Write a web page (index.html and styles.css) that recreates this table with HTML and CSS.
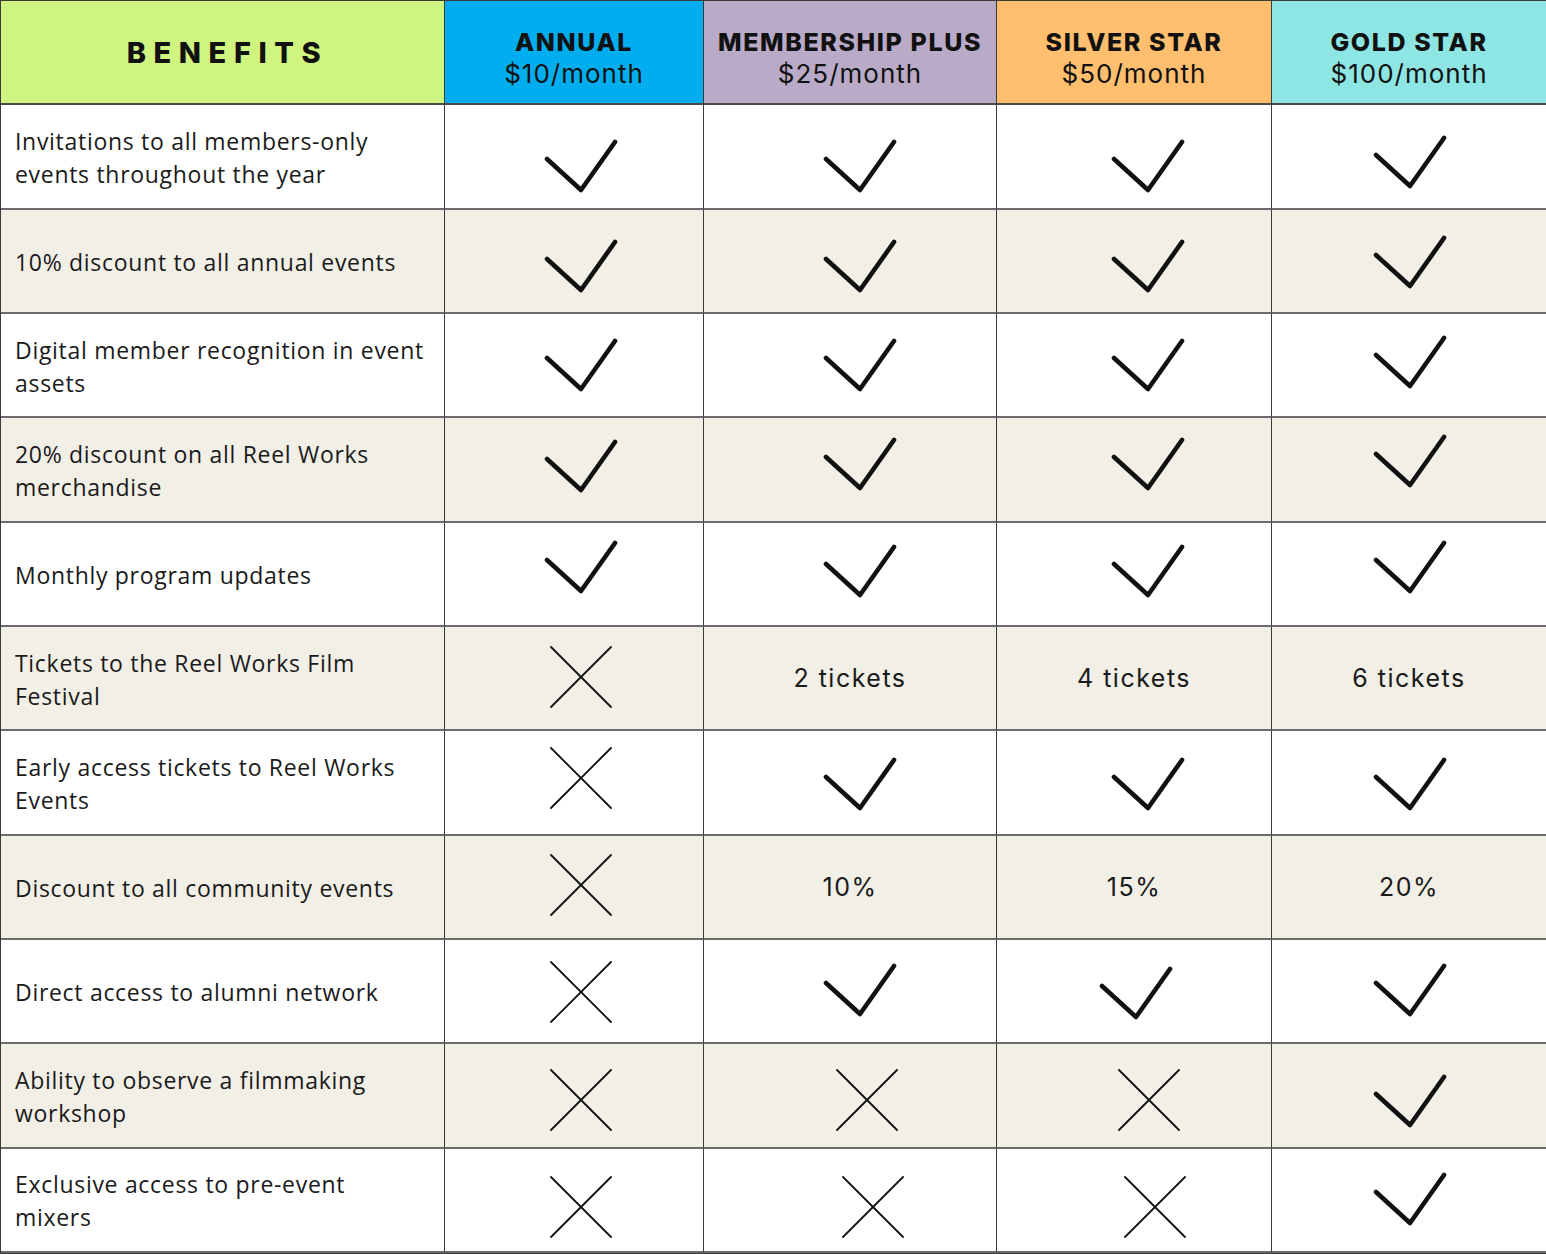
FILE: index.html
```html
<!DOCTYPE html>
<html lang="en">
<head>
<meta charset="utf-8">
<title>Membership Benefits</title>
<link rel="stylesheet" href="styles.css">
</head>
<body>
<svg width="0" height="0" class="defs" aria-hidden="true">
  <defs>
    <symbol id="chk" viewBox="0 0 74 54">
      <polyline points="3,20 37,51 71,3" fill="none" stroke="#111" stroke-width="4.6" stroke-linecap="round" stroke-linejoin="round"/>
    </symbol>
    <symbol id="crs" viewBox="0 0 62 62">
      <line x1="1" y1="1" x2="61" y2="61" stroke="#111" stroke-width="1.8" stroke-linecap="round"/>
      <line x1="61" y1="1" x2="1" y2="61" stroke="#111" stroke-width="1.8" stroke-linecap="round"/>
    </symbol>
  </defs>
</svg>
<div class="table">
  <div class="row">
    <div class="cell head benefits">BENEFITS</div>
    <div class="cell head annual"><span class="tier">ANNUAL</span><span class="price">$10/month</span></div>
    <div class="cell head plus"><span class="tier">MEMBERSHIP PLUS</span><span class="price">$25/month</span></div>
    <div class="cell head silver"><span class="tier">SILVER STAR</span><span class="price">$50/month</span></div>
    <div class="cell head gold"><span class="tier">GOLD STAR</span><span class="price">$100/month</span></div>
  </div>

  <div class="row r1">
    <div class="cell label">Invitations to all members-only events throughout the year</div>
    <div class="cell mark c1"><svg class="check"><use href="#chk"/></svg></div>
    <div class="cell mark c2"><svg class="check"><use href="#chk"/></svg></div>
    <div class="cell mark c3"><svg class="check"><use href="#chk"/></svg></div>
    <div class="cell mark c4"><svg class="check"><use href="#chk"/></svg></div>
  </div>

  <div class="row r2 alt">
    <div class="cell label">10% discount to all annual events</div>
    <div class="cell mark c1"><svg class="check"><use href="#chk"/></svg></div>
    <div class="cell mark c2"><svg class="check"><use href="#chk"/></svg></div>
    <div class="cell mark c3"><svg class="check"><use href="#chk"/></svg></div>
    <div class="cell mark c4"><svg class="check"><use href="#chk"/></svg></div>
  </div>

  <div class="row r3">
    <div class="cell label">Digital member recognition in event assets</div>
    <div class="cell mark c1"><svg class="check"><use href="#chk"/></svg></div>
    <div class="cell mark c2"><svg class="check"><use href="#chk"/></svg></div>
    <div class="cell mark c3"><svg class="check"><use href="#chk"/></svg></div>
    <div class="cell mark c4"><svg class="check"><use href="#chk"/></svg></div>
  </div>

  <div class="row r4 alt">
    <div class="cell label">20% discount on all Reel Works merchandise</div>
    <div class="cell mark c1"><svg class="check"><use href="#chk"/></svg></div>
    <div class="cell mark c2"><svg class="check"><use href="#chk"/></svg></div>
    <div class="cell mark c3"><svg class="check"><use href="#chk"/></svg></div>
    <div class="cell mark c4"><svg class="check"><use href="#chk"/></svg></div>
  </div>

  <div class="row r5">
    <div class="cell label">Monthly program updates</div>
    <div class="cell mark c1"><svg class="check"><use href="#chk"/></svg></div>
    <div class="cell mark c2"><svg class="check"><use href="#chk"/></svg></div>
    <div class="cell mark c3"><svg class="check"><use href="#chk"/></svg></div>
    <div class="cell mark c4"><svg class="check"><use href="#chk"/></svg></div>
  </div>

  <div class="row r6 alt">
    <div class="cell label">Tickets to the Reel Works Film Festival</div>
    <div class="cell mark c1"><svg class="cross"><use href="#crs"/></svg></div>
    <div class="cell value">2 tickets</div>
    <div class="cell value">4 tickets</div>
    <div class="cell value">6 tickets</div>
  </div>

  <div class="row r7">
    <div class="cell label">Early access tickets to Reel Works Events</div>
    <div class="cell mark c1"><svg class="cross"><use href="#crs"/></svg></div>
    <div class="cell mark c2"><svg class="check"><use href="#chk"/></svg></div>
    <div class="cell mark c3"><svg class="check"><use href="#chk"/></svg></div>
    <div class="cell mark c4"><svg class="check"><use href="#chk"/></svg></div>
  </div>

  <div class="row r8 alt">
    <div class="cell label">Discount to all community events</div>
    <div class="cell mark c1"><svg class="cross"><use href="#crs"/></svg></div>
    <div class="cell value">10%</div>
    <div class="cell value">15%</div>
    <div class="cell value">20%</div>
  </div>

  <div class="row r9">
    <div class="cell label">Direct access to alumni network</div>
    <div class="cell mark c1"><svg class="cross"><use href="#crs"/></svg></div>
    <div class="cell mark c2"><svg class="check"><use href="#chk"/></svg></div>
    <div class="cell mark c3 off"><svg class="check"><use href="#chk"/></svg></div>
    <div class="cell mark c4"><svg class="check"><use href="#chk"/></svg></div>
  </div>

  <div class="row r10 alt">
    <div class="cell label">Ability to observe a filmmaking workshop</div>
    <div class="cell mark c1"><svg class="cross"><use href="#crs"/></svg></div>
    <div class="cell mark c2"><svg class="cross"><use href="#crs"/></svg></div>
    <div class="cell mark c3"><svg class="cross"><use href="#crs"/></svg></div>
    <div class="cell mark c4"><svg class="check"><use href="#chk"/></svg></div>
  </div>

  <div class="row r11">
    <div class="cell label">Exclusive access to pre-event<br>mixers</div>
    <div class="cell mark c1"><svg class="cross"><use href="#crs"/></svg></div>
    <div class="cell mark c2 off"><svg class="cross"><use href="#crs"/></svg></div>
    <div class="cell mark c3 off"><svg class="cross"><use href="#crs"/></svg></div>
    <div class="cell mark c4"><svg class="check"><use href="#chk"/></svg></div>
  </div>
</div>
</body>
</html>
```

FILE: styles.css
```css
* { box-sizing: border-box; }

html, body {
  margin: 0;
  padding: 0;
  background: #ffffff;
}

.defs {
  position: absolute;
  width: 0;
  height: 0;
}

.table {
  display: grid;
  grid-template-columns: 444px 259px 293px 275px 1fr;
  grid-template-rows: repeat(12, 1fr);
  width: 1546px;
  height: 1254px;
  border-top: 1px solid #3a3a3a;
  border-left: 1px solid #3a3a3a;
  border-bottom: 1px solid #3a3a3a;
}

.row { display: contents; }

.cell {
  border-right: 1px solid #3a3a3a;
  border-bottom: 2px solid #6b6b6b;
  background: #ffffff;
  display: flex;
  align-items: center;
}

.row .cell:last-child { border-right: none; }

.alt .cell { background: #f2efe7; }

/* ---------- header ---------- */
.head {
  flex-direction: column;
  justify-content: center;
  border-bottom: 2px solid #4a4a4a;
  padding-top: 11px;
  font-family: Inter, "Liberation Sans", sans-serif;
  color: #111;
  text-align: center;
}

.benefits {
  background: #cff47f;
  flex-direction: row;
  padding: 0 0 0 10px;
  font-weight: 800;
  font-size: 29px;
  letter-spacing: 7.6px;
}

.annual { background: #00aeef; }
.plus { background: #b9abc8; }
.silver { background: #ffbf6e; }
.gold { background: #8ee6e4; }

.tier {
  font-weight: 800;
  font-size: 25px;
  line-height: 31px;
  letter-spacing: 1.6px;
}

.price {
  font-weight: 400;
  font-size: 26px;
  line-height: 31px;
  letter-spacing: 1px;
}

/* ---------- body ---------- */
.label {
  padding: 3px 14px 0 14px;
  font-family: "Open Sans", "Liberation Sans", sans-serif;
  font-size: 23px;
  line-height: 33px;
  color: #1a1a1a;
  letter-spacing: 0.7px;
}

.value {
  justify-content: center;
  font-family: Inter, "Liberation Sans", sans-serif;
  font-size: 25px;
  color: #1a1a1a;
  letter-spacing: 1.5px;
}

.mark {
  align-items: flex-start;
  justify-content: flex-start;
}

.check {
  width: 74px;
  height: 54px;
  margin-top: var(--ct);
}

.cross {
  width: 62px;
  height: 62px;
  margin-top: var(--xt);
}

/* column placement of the hand-drawn marks */
.c1 .check { margin-left: 99px; margin-top: var(--at, var(--ct)); }
.c1 .cross { margin-left: 105px; }
.c2 .check { margin-left: 119px; }
.c2 .cross { margin-left: 132px; }
.c2.off .cross { margin-left: 138px; }
.c3 .check { margin-left: 114px; }
.c3.off .check { margin-left: 102px; margin-top: 26px; }
.c3 .cross { margin-left: 121px; }
.c3.off .cross { margin-left: 127px; }
.c4 .check { margin-left: 101px; margin-top: var(--gt, var(--ct)); }

/* row placement of the hand-drawn marks */
.r1 { --ct: 34px; --gt: 30px; }
.r2 { --ct: 29px; --gt: 25px; }
.r3 { --ct: 24px; --gt: 21px; }
.r4 { --ct: 19px; --at: 21px; --gt: 16px; }
.r5 { --ct: 21px; --at: 17px; --gt: 17px; }
.r6 { --xt: 19px; }
.r7 { --ct: 26px; --xt: 16px; }
.r8 { --xt: 18px; }
.r9 { --ct: 23px; --xt: 21px; }
.r10 { --xt: 25px; --gt: 30px; }
.r11 { --xt: 27px; --gt: 23px; }
```
